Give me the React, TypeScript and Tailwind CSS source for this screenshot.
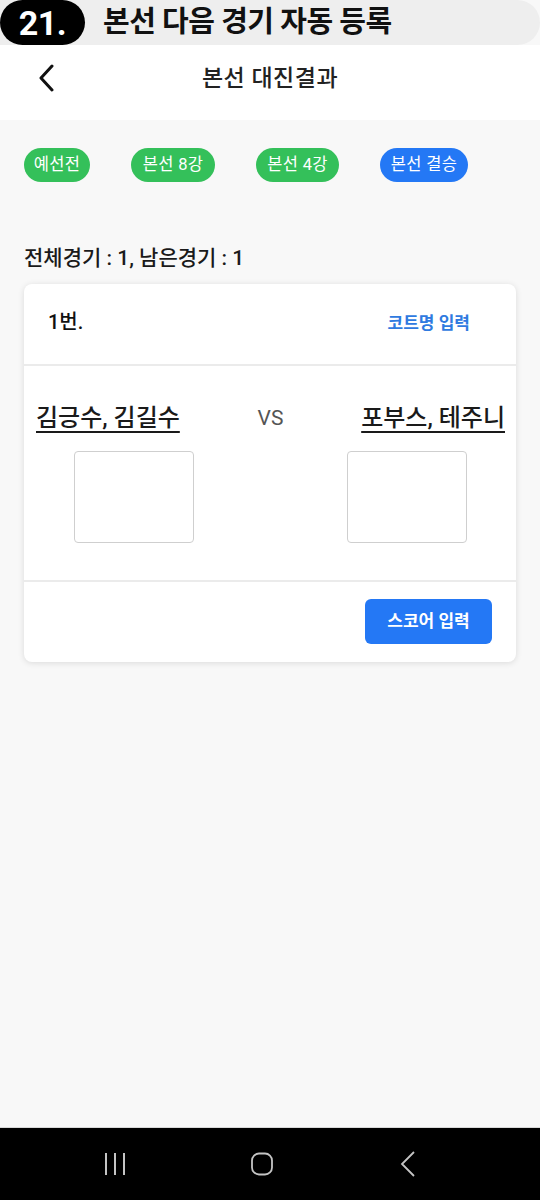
import { useState } from "react";

const font = { fontFamily: 'Roboto, "Noto Sans CJK KR", "Noto Sans", sans-serif' };

const rounds = [
  { label: "예선전", active: false, w: "w-[66px]" },
  { label: "본선 8강", active: false, w: "w-[84px]" },
  { label: "본선 4강", active: false, w: "w-[83px]" },
  { label: "본선 결승", active: true, w: "w-[88px]" },
];

function BackIcon({ className }: { className?: string }) {
  return (
    <svg viewBox="0 0 16 28" className={className} fill="none">
      <path d="M14 2 3 14l11 12" stroke="currentColor" strokeWidth="3" strokeLinecap="round" strokeLinejoin="round" />
    </svg>
  );
}

export default function App() {
  const [left, setLeft] = useState("");
  const [right, setRight] = useState("");

  return (
    <div className="flex h-[1200px] w-[540px] flex-col overflow-hidden bg-[#f8f8f8]" style={font}>
      {/* doc banner */}
      <div className="flex h-[45px] items-center rounded-r-full bg-[#eeeeee]">
        <div className="flex h-[45px] w-[85px] items-center justify-center rounded-full bg-black text-[34px] font-bold leading-none tracking-[-0.5px] text-white">
          21.
        </div>
        <span className="ml-[18px] text-[29px] font-bold leading-none tracking-[-0.5px] text-[#111]">
          본선 다음 경기 자동 등록
        </span>
      </div>

      {/* top bar */}
      <header className="relative flex h-[75px] items-center justify-center bg-white pb-[9px]">
        <button className="absolute left-[38px] top-[19px] text-[#111]" aria-label="back">
          <BackIcon className="h-[28px] w-[16px]" />
        </button>
        <h1 className="text-[23px] font-medium leading-none tracking-[0.5px] text-[#222]">본선 대진결과</h1>
      </header>

      <main className="flex flex-1 flex-col px-6">
        <div className="mt-[28px] flex gap-[41px]">
          {rounds.map((r) => (
            <span
              key={r.label}
              className={`flex h-[34px] items-center justify-center rounded-full text-[16.5px] leading-none tracking-[0.3px] text-white ${r.w} ${
                r.active ? "bg-[#2478f5]" : "bg-[#34c05a]"
              }`}
            >
              {r.label}
            </span>
          ))}
        </div>

        <p className="mt-[66px] text-[21px] font-medium leading-none text-[#1a1a1a]">
          전체경기 : 1, 남은경기 : 1
        </p>

        <section className="mt-[15px] rounded-lg bg-white shadow-[0_1px_6px_rgba(0,0,0,0.12)]">
          <div className="flex h-[82px] items-center justify-between border-b-2 border-[#ebebeb] pb-[4px] pl-6 pr-[46px]">
            <span className="text-[20px] font-medium leading-none text-[#111]">1번.</span>
            <button className="mt-[2px] text-[17px] font-bold leading-none text-[#2f7ae0]">코트명 입력</button>
          </div>

          <div className="border-b-2 border-[#ebebeb] pb-[37px] pt-[40px]">
            <div className="flex items-center justify-between pl-3 pr-[11px]">
              <span className="text-[24px] font-medium leading-none text-[#1a1a1a] underline decoration-[1.5px] underline-offset-[5px]">
                김긍수, 김길수
              </span>
              <span className="text-[21px] leading-none text-[#555]">VS</span>
              <span className="text-[24px] font-medium leading-none text-[#1a1a1a] underline decoration-[1.5px] underline-offset-[5px]">
                포부스, 테주니
              </span>
            </div>
            <div className="mt-[21px] flex justify-between pl-[50px] pr-[49px]">
              <input
                value={left}
                onChange={(e) => setLeft(e.target.value)}
                className="h-[92px] w-[120px] rounded border border-[#cfcfcf] text-center text-2xl outline-none"
              />
              <input
                value={right}
                onChange={(e) => setRight(e.target.value)}
                className="h-[92px] w-[120px] rounded border border-[#cfcfcf] text-center text-2xl outline-none"
              />
            </div>
          </div>

          <div className="flex justify-end pb-[18px] pr-6 pt-[17px]">
            <button className="flex h-[45px] w-[127px] items-center justify-center rounded-md bg-[#2478f5] text-[17px] font-bold text-white">
              스코어 입력
            </button>
          </div>
        </section>
      </main>

      {/* android nav */}
      <nav className="flex h-[73px] items-center gap-[125px] border-t border-[#d8d8d8] bg-black pl-[104px] text-[#c4c4c4]">
        <svg viewBox="0 0 22 24" className="h-[24px] w-[22px]" fill="none" stroke="currentColor" strokeWidth="2">
          <path d="M2 1v22M11 1v22M20 1v22" />
        </svg>
        <svg viewBox="0 0 22 24" className="h-[24px] w-[22px]" fill="none" stroke="currentColor" strokeWidth="1.8">
          <rect x="1" y="1.5" width="20" height="21" rx="7" />
        </svg>
        <svg viewBox="0 0 22 26" className="h-[26px] w-[22px]" fill="none" stroke="currentColor" strokeWidth="1.8">
          <path d="M16 1 4 13l12 12" />
        </svg>
      </nav>
    </div>
  );
}
